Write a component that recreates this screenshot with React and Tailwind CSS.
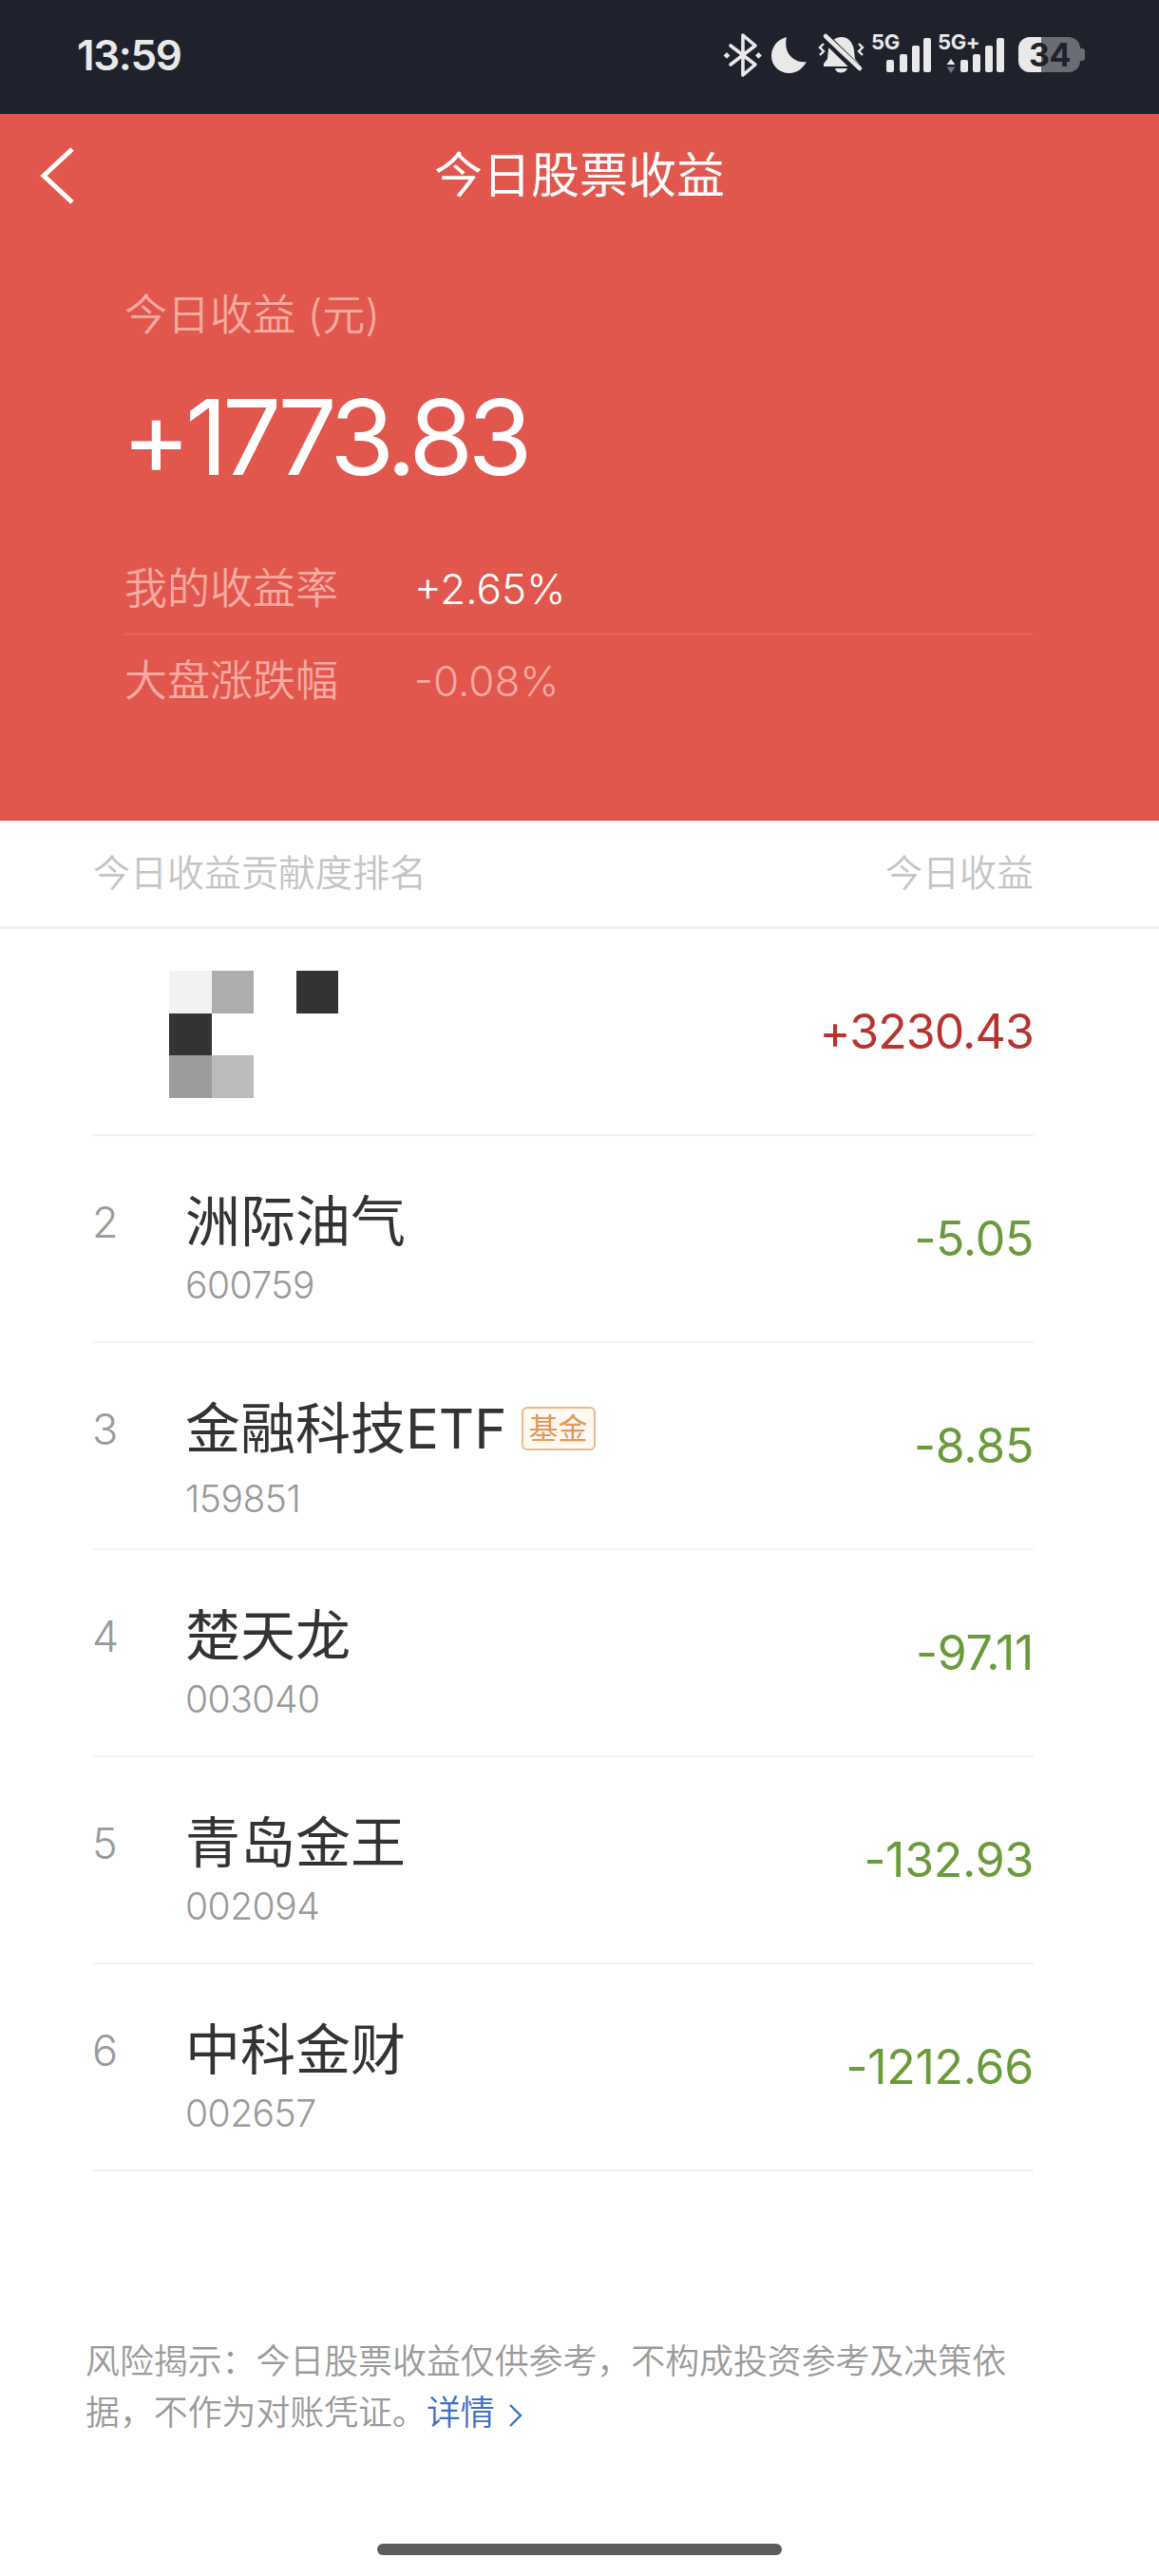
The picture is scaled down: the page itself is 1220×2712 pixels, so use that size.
const font = { fontFamily: 'Inter, "Noto Sans CJK SC", sans-serif' };

function StatusIcons() {
  return (
    <svg width="420" height="70" viewBox="0 0 420 70" className="shrink-0">
      <path d="M29 28 L55 48 L42 59 V17 L55 28 L29 48" fill="none" stroke="#e9e9ea" strokeWidth="3.6" strokeLinejoin="round" strokeLinecap="round" />
      <path d="M25 35 l3.4 3.4 -3.4 3.4 -3.4 -3.4z M58.5 35 l3.4 3.4 -3.4 3.4 -3.4 -3.4z" fill="#e9e9ea" />
      <path d="M88 19 C76 22 72 32 72 39 C72 49 80 57 91 57 C99 57 105 52 109 45 C96 47 84 36 88 19Z" fill="#e9e9ea" />
      <path d="M146 19 C138 19 133 25 132 32 L131 42 L127 47 V50 H164 V47 L160 42 L159 33 C158 25 153 19 146 19Z M139 52 C140 58 150 58 152 52Z" fill="#e9e9ea" />
      <path d="M130 21 L166 56" stroke="#1f222c" strokeWidth="10" />
      <path d="M129 18 L165 52" stroke="#e9e9ea" strokeWidth="4.5" strokeLinecap="round" />
      <path d="M127 26 l-4 4 4 4 -4 4 M164 26 l4 4 -4 4 4 4" stroke="#e9e9ea" strokeWidth="2.4" fill="none" />
      <text x="177" y="32" fontFamily="Inter, sans-serif" fontWeight="700" fontSize="22" fill="#e9e9ea" letterSpacing="-0.4">5G</text>
      <g fill="#e9e9ea">
        <rect x="193" y="43" width="8" height="13" rx="2" />
        <rect x="207" y="37" width="8" height="19" rx="2" />
        <rect x="220" y="28" width="8" height="28" rx="2" />
        <rect x="232" y="20" width="8" height="36" rx="2" />
      </g>
      <text x="247" y="32" fontFamily="Inter, sans-serif" fontWeight="700" fontSize="22" fill="#e9e9ea" letterSpacing="-0.4">5G+</text>
      <path d="M261 42 l-4.5 6 h9z" fill="#e9e9ea" />
      <path d="M261 57 l-4.5 -6.5 h9z" fill="#77787c" />
      <g fill="#e9e9ea">
        <rect x="271" y="43" width="8" height="13" rx="2" />
        <rect x="284" y="37" width="8" height="19" rx="2" />
        <rect x="297" y="28" width="8" height="28" rx="2" />
        <rect x="309" y="20" width="8" height="36" rx="2" />
      </g>
      <rect x="332" y="19" width="65" height="37" rx="12" fill="#6c6d72" />
      <path d="M344 19 H356 V56 H344 A12 12 0 0 1 332 44 V31 A12 12 0 0 1 344 19Z" fill="#e9e9ea" />
      <path d="M397 31 h2 a3 3 0 0 1 3 3 v7 a3 3 0 0 1 -3 3 h-2z" fill="#6c6d72" />
      <text x="365" y="50" textAnchor="middle" fontFamily="Inter, sans-serif" fontWeight="700" fontSize="34" letterSpacing="-0.5" fill="#1f222c">34</text>
    </svg>
  );
}

const pixels = [
  '#f2f2f2', '#adadad', '', '#333333',
  '#333333', '', '', '',
  '#9c9c9c', '#bbbbbb', '', '',
];

const rows = [
  { rank: '2', name: '洲际油气', code: '600759', value: '-5.05' },
  { rank: '3', name: '金融科技ETF', code: '159851', value: '-8.85', badge: true },
  { rank: '4', name: '楚天龙', code: '003040', value: '-97.11' },
  { rank: '5', name: '青岛金王', code: '002094', value: '-132.93' },
  { rank: '6', name: '中科金财', code: '002657', value: '-1212.66' },
];

export default function App() {
  return (
    <div style={font} className="w-[1220px] h-[2712px] bg-white overflow-hidden font-light">
      <div className="h-[120px] bg-[#1f222c] flex items-start justify-between pl-[81px]">
        <span className="mt-[32px] text-[44px] leading-[52px] font-semibold tracking-[-1.4px] text-[#e9e9ea]">13:59</span>
        <div className="mt-[20px] mr-[60px]"><StatusIcons /></div>
      </div>

      <div className="h-[744px] bg-[#e1574e]">
        <div className="relative h-[130px] flex items-center justify-center">
          <svg width="44" height="64" viewBox="0 0 44 64" className="absolute left-[39px] top-[33px]">
            <path d="M37 4 L7 32 L37 60" fill="none" stroke="#ffffff" strokeWidth="5" />
          </svg>
          <span className="text-[51px] leading-[60px] font-normal text-white">今日股票收益</span>
        </div>
        <div className="pl-[131px] pr-[132px]">
          <div className="mt-[57px] text-[45px] leading-[50px] font-[350] text-[#f8a9a2]">今日收益 (元)</div>
          <div className="mt-[48px] -ml-[3px] text-[110px] leading-[110px] font-normal text-white tracking-[-5.8px]">+1773.83</div>
          <div className="mt-[57px] h-[96px] flex items-center border-b border-[#ea7068]">
            <span className="w-[305px] text-[45px] font-[350] text-[#f8a9a2]">我的收益率</span>
            <span className="text-[44px] font-[350] text-white">+2.65%</span>
          </div>
          <div className="h-[98px] flex items-center">
            <span className="w-[305px] text-[45px] font-[350] text-[#f8a9a2]">大盘涨跌幅</span>
            <span className="text-[44px] font-[350] text-[#f8a9a2]">-0.08%</span>
          </div>
        </div>
      </div>

      <div className="h-[114px] border-b-[3px] border-[#f0f0f0] flex items-center justify-between pl-[98px] pr-[132px] text-[39px] font-[350] text-[#c4c4c4]">
        <span>今日收益贡献度排名</span>
        <span>今日收益</span>
      </div>

      <div className="ml-[98px] mr-[132px]">
        <div className="h-[218px] border-b-2 border-[#f2f2f2] flex items-center justify-between">
          <div className="ml-[80px] mt-[6px] grid grid-cols-[repeat(4,44.5px)] auto-rows-[44.5px]">
            {pixels.map((c, i) => (
              <div key={i} style={{ backgroundColor: c || 'transparent' }} />
            ))}
          </div>
          <span className="text-[50px] font-normal tracking-[-0.9px] text-[#b7342e]">+3230.43</span>
        </div>
        {rows.map((r) => (
          <div key={r.rank} className="h-[218px] border-b-2 border-[#f2f2f2] flex justify-between">
            <div className="w-[98px] -ml-[1px] pt-[64px] text-[45px] leading-[54px] text-[#9a9a9a]">{r.rank}</div>
            <div className="flex-1 pt-[62px]">
              <div className="flex items-center h-[56px]">
                <span className="text-[58px] leading-[56px] font-normal text-[#333333]">{r.name}</span>
                {r.badge && (
                  <span className="ml-[15px] w-[78px] h-[46px] flex items-center justify-center rounded-[6px] border-2 border-[#e8b98a] bg-[#fff9f2] text-[31px] font-normal text-[#e0975a]">基金</span>
                )}
              </div>
              <div className={`${r.badge ? 'mt-[26px]' : 'mt-[19px]'} text-[39px] leading-[40px] tracking-[-0.5px] text-[#9a9a9a]`}>{r.code}</div>
            </div>
            <div className="self-center text-[50px] font-normal tracking-[-0.3px] text-[#6a9b3a]">{r.value}</div>
          </div>
        ))}
      </div>

      <div className="mt-[173px] ml-[90px] w-[975px] text-[35.9px] leading-[54px] font-[350] text-[#9a9a9a]">
        风险揭示：今日股票收益仅供参考，不构成投资参考及决策依据，不作为对账凭证。
        <span className="text-[#3d6fc4]">详情</span>
        <svg width="16" height="26" viewBox="0 0 16 26" className="inline-block ml-[14px] align-[-3px]">
          <path d="M2 2 L13 13 L2 24" fill="none" stroke="#3d6fc4" strokeWidth="2.4" />
        </svg>
      </div>

      <div className="mt-[111px] mx-auto w-[426px] h-[12px] rounded-full bg-[#5c5c5c]" />
    </div>
  );
}
